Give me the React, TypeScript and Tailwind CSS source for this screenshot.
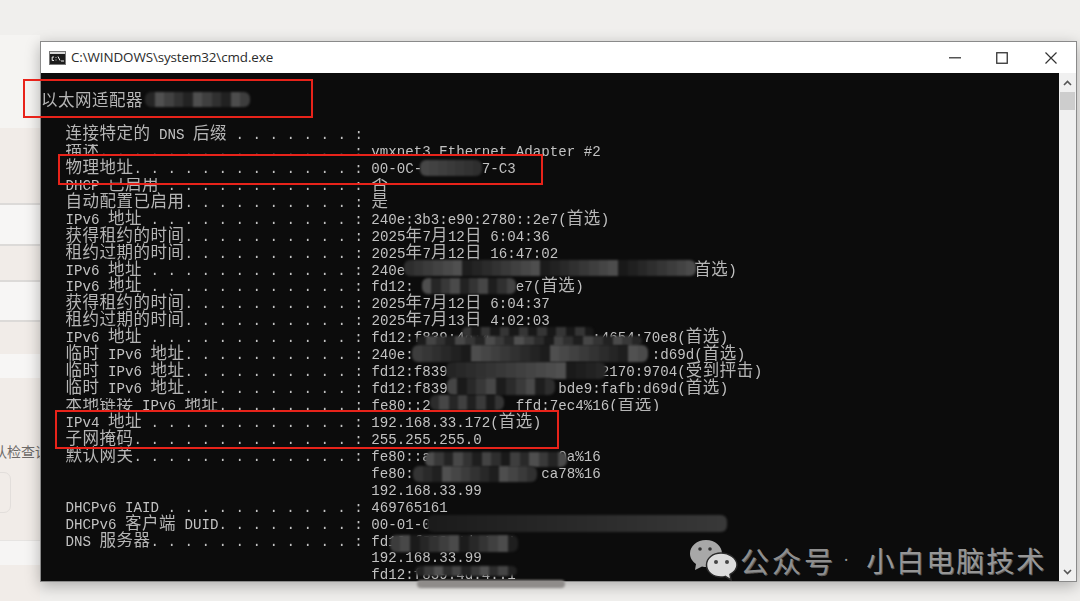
const cjkFont = `font-['Noto_Sans_CJK_SC','Noto_Sans_CJK_JP',sans-serif]`;

// console rows, label is padded with dots the way ipconfig does it
const rows: { label?: string; value?: string; cut?: string }[] = [
  { label: "连接特定的 DNS 后缀", value: "" },
  { label: "描述", value: "vmxnet3 Ethernet Adapter #2", cut: "h-[12px] overflow-hidden" },
  { label: "物理地址", value: "00-0C-       7-C3" },
  { label: "DHCP 已启用", value: "否", cut: "h-[14px] overflow-hidden" },
  { label: "自动配置已启用", value: "是" },
  { label: "IPv6 地址", value: "240e:3b3:e90:2780::2e7(首选)" },
  { label: "获得租约的时间", value: "2025年7月12日 6:04:36" },
  { label: "租约过期的时间", value: "2025年7月12日 16:47:02" },
  { label: "IPv6 地址", value: "240e                                  首选)" },
  { label: "IPv6 地址", value: "fd12:            e7(首选)" },
  { label: "获得租约的时间", value: "2025年7月12日 6:04:37" },
  { label: "租约过期的时间", value: "2025年7月13日 4:02:03" },
  { label: "IPv6 地址", value: "fd12:f839:4d:4            :4654:70e8(首选)" },
  { label: "临时 IPv6 地址", value: "240e:                            :d69d(首选)" },
  { label: "临时 IPv6 地址", value: "fd12:f839:1ll              2170:9704(受到抨击)" },
  { label: "临时 IPv6 地址", value: "fd12:f839             bde9:fafb:d69d(首选)" },
  { label: "本地链接 IPv6 地址", value: "fe80::2          ffd:7ec4%16(首选)", cut: "h-[13px] overflow-hidden" },
  { label: "IPv4 地址", value: "192.168.33.172(首选)" },
  { label: "子网掩码", value: "255.255.255.0" },
  { label: "默认网关", value: "fe80::a               0a%16" },
  { value: "fe80:               ca78%16" },
  { value: "192.168.33.99" },
  { label: "DHCPv6 IAID", value: "469765161" },
  { label: "DHCPv6 客户端 DUID", value: "00-01-0" },
  { label: "DNS 服务器", value: "fd12:f839:4d:4::1" },
  { value: "192.168.33.99" },
  { value: "fd12:f839:4d:4::1" },
];

// [left, top, width, height] of the blurred out parts
const mosaics: number[][] = [
  [145, 92, 105, 15],
  [420, 160, 62, 16],
  [404, 260, 292, 16],
  [422, 278, 94, 16],
  [462, 327, 132, 10],
  [416, 336, 226, 10],
  [412, 345, 236, 17],
  [446, 362, 160, 17],
  [447, 378, 108, 17],
  [430, 395, 74, 15],
  [425, 452, 142, 15],
  [413, 466, 124, 16],
  [427, 515, 300, 17],
  [390, 535, 128, 17],
  [415, 566, 102, 10],
];

const cells = (label: string) => {
  let n = 0;
  for (const ch of label) n += /[\u3000-\u9fff]/.test(ch) ? 2 : 1;
  return n;
};

const makeLine = (label?: string, value?: string) => {
  if (!label) return " ".repeat(36) + (value ?? "");
  let col = cells(label);
  let out = label;
  if (col % 2 === 1) {
    out += " ";
    col += 1;
  }
  while (col < 34) {
    out += ". ";
    col += 2;
  }
  return out + ": " + (value ?? "");
};

// CJK takes two cells of the console grid, so it gets its own span
function ConsoleText({ text }: { text: string }) {
  const parts = text.split(/([\u3000-\u9fff]+)/);
  return (
    <>
      {parts.map((part, i) =>
        i % 2 === 1 ? (
          <span key={i} className={`${cjkFont} text-[16.5px] leading-[0] tracking-[0.5px] text-[#b6b6b6]`}>
            {part}
          </span>
        ) : (
          <span key={i}>{part}</span>
        )
      )}
    </>
  );
}

function Mosaic({ box, seed }: { box: number[]; seed: number }) {
  const [left, top, width, height] = box;
  const cols = Math.ceil(width / 10);
  const shades: string[] = [];
  for (let i = 0; i < cols; i++) {
    const v = 24 + (((i + 3) * (seed + 7) * 37) % 58);
    shades.push(`rgb(${v},${v},${v})`);
  }
  return (
    <div
      className="absolute rounded-[6px] overflow-hidden blur-[1.2px] grid"
      style={{
        left,
        top,
        width,
        height,
        gridTemplateColumns: `repeat(${cols}, 1fr)`,
      }}
    >
      {shades.map((color, i) => (
        <div key={i} style={{ backgroundColor: color }} />
      ))}
    </div>
  );
}

function CmdIcon() {
  return (
    <svg width="17" height="14" viewBox="0 0 17 14">
      <rect x="0.5" y="0.5" width="16" height="13" fill="#1c1c1c" stroke="#777" />
      <rect x="1" y="1" width="15" height="2" fill="#d8d8d8" />
      <path d="M5 6H3.2V9.5H5" fill="none" stroke="#eee" strokeWidth="1" />
      <path d="M7 6.2V7M7 8.6V9.4" stroke="#eee" strokeWidth="1" />
      <path d="M9 5.5L11 9.5M12 10H15" fill="none" stroke="#eee" strokeWidth="1" />
    </svg>
  );
}

function WeChatMark() {
  return (
    <svg width="50" height="42" viewBox="0 0 50 42">
      <path d="M17 1C8 1 1 7 1 14.5c0 4.500 2.500 8 6 10.500L6 31l7-3.500c1.500.4 3 .5 4 .5 9 0 16-6 16-13.500S26 1 17 1Z" fill="#a8a8a8" />
      <path d="M32 14c-8.300 0-14.500 5.300-14.500 12S23.700 38 32 38c1.500 0 3-.2 4.300-.6L42 41l-1-5.500c4-2.300 7-5.500 7-9.500 0-6.700-7.700-12-16-12Z" fill="#dcdcdc" stroke="#2a2a2a" strokeWidth="1.500" />
      <circle cx="11" cy="10" r="1.800" fill="#333" />
      <circle cx="21" cy="10" r="1.800" fill="#333" />
      <circle cx="27" cy="23" r="2" fill="#444" />
      <circle cx="38" cy="23" r="2" fill="#444" />
    </svg>
  );
}

export default function App() {
  return (
    <div className="relative w-[1080px] h-[601px] overflow-hidden bg-[#f0efed]">
      {/* page behind the window, only the left edge shows */}
      <div className="w-[40px] h-full flex flex-col overflow-hidden">
        <div className="h-[35px] shrink-0" />
        <div className="h-[93px] shrink-0 bg-[#f5f4f2]" />
        <div className="h-[77px] shrink-0 bg-[#f1ece8] border-b-2 border-[#dcdad8]" />
        <div className="h-[41px] shrink-0 bg-[#f7f6f5] border-b-2 border-[#dcdad8]" />
        <div className="h-[36px] shrink-0 bg-[#f1ece8] border-b-2 border-[#dcdad8]" />
        <div className="h-[40px] shrink-0 bg-[#f7f6f5] border-b-2 border-[#dcdad8]" />
        <div className="h-[32px] shrink-0 bg-[#f1ece8]" />
        <div className="h-[24px] shrink-0 bg-[#f7f6f5]" />
        <div className="h-[162px] shrink-0 bg-[#f1ece8] relative overflow-hidden">
          <div className={`absolute top-[63px] left-[-7px] whitespace-nowrap text-[14px] leading-[20px] text-[#6e6b69] ${cjkFont}`}>
            队检查设
          </div>
          <div className="absolute top-[94px] left-[-24px] w-[35px] h-[41px] rounded-[7px] border border-[#e2dedb]" />
        </div>
        <div className="h-[25px] shrink-0 bg-[#f6f5f4] border-t border-[#e6e4e2]" />
        <div className="flex-1 bg-[#f1ece8]" />
      </div>

      {/* cmd window */}
      <div className="absolute left-[40px] top-[41px] w-[1037px] h-[541px] flex flex-col border border-[#8a8a8a] bg-white shadow-[0_4px_14px_rgba(0,0,0,0.28)]">
        <div className="h-[31px] shrink-0 flex items-center bg-white">
          <div className="ml-[8px]">
            <CmdIcon />
          </div>
          <span className="ml-[5px] text-[13.400px] text-[#2b2b2b] font-['Open_Sans',sans-serif] tracking-[-0.1px]">
            C:\WINDOWS\system32\cmd.exe
          </span>
          <div className="ml-auto flex items-center h-full">
            <svg width="12" height="2" viewBox="0 0 12 2" className="mr-[35px]">
              <rect width="12" height="1.500" fill="#555" />
            </svg>
            <svg width="12" height="12" viewBox="0 0 12 12" className="mr-[37px]">
              <rect x="0.750" y="0.750" width="10.500" height="10.500" fill="none" stroke="#333" strokeWidth="1.300" />
            </svg>
            <svg width="12" height="12" viewBox="0 0 12 12" className="mr-[19px]">
              <path d="M0.500 0.500L11.500 11.500M11.500 0.500L0.500 11.500" stroke="#333" strokeWidth="1.200" />
            </svg>
          </div>
        </div>
        <div className="flex-1 min-h-0 flex">
          <div className="flex-1 bg-[#0c0c0c] overflow-hidden text-[#c2c2c2] font-['Liberation_Mono',monospace] text-[14.17px] blur-[0.35px]">
            <div className={`mt-[16px] h-[20px] leading-[20px] text-[16.5px] tracking-[0.5px] text-[#b6b6b6] ${cjkFont}`}>
              以太网适配器
            </div>
            <div className="mt-[18px] ml-[24.500px] flex flex-col">
              {rows.map((row, i) => (
                <div key={i} className="h-[16.950px] shrink-0">
                  <div className={`leading-[17px] whitespace-pre ${row.cut ?? "h-[17px]"}`}>
                    <ConsoleText text={makeLine(row.label, row.value)} />
                  </div>
                </div>
              ))}
            </div>
          </div>
          {/* scrollbar */}
          <div className="w-[17px] shrink-0 bg-[#f0f0f0] flex flex-col items-center">
            <svg width="9" height="6" viewBox="0 0 9 6" className="mt-[7px]">
              <path d="M1 5L4.500 1.500L8 5" fill="none" stroke="#555" strokeWidth="1.600" />
            </svg>
            <div className="mt-[6px] w-[15px] h-[18px] bg-[#cdcdcd]" />
            <svg width="9" height="6" viewBox="0 0 9 6" className="mt-auto mb-[6px]">
              <path d="M1 1L4.500 4.500L8 1" fill="none" stroke="#555" strokeWidth="1.600" />
            </svg>
          </div>
        </div>
      </div>

      {mosaics.map((box, i) => (
        <Mosaic key={i} box={box} seed={i * 5 + 2} />
      ))}
      <div className="absolute left-[417px] top-[580px] w-[148px] h-[8px] rounded-[4px] bg-[#8f8c8a] blur-[1px]" />

      {/* red marks */}
      <div className="absolute left-[23px] top-[79px] w-[290px] h-[39px] border-2 border-[#e8231a]" />
      <div className="absolute left-[58px] top-[154px] w-[485px] h-[31px] border-2 border-[#e8231a]" />
      <div className="absolute left-[55px] top-[410px] w-[504px] h-[39px] border-2 border-[#e8231a]" />

      {/* watermark */}
      <div className="absolute left-[689px] top-[539px] flex items-center">
        <WeChatMark />
        <span className={`ml-[1px] text-[29px] leading-[40px] tracking-[3px] whitespace-nowrap text-[#8e8e8e] [text-shadow:1px_1px_0_#5c5c5c] ${cjkFont}`}>
          公众号
        </span>
        <span className="ml-[8px] mr-[18px] text-[16px] text-[#9a9a9a]">·</span>
        <span className={`text-[28px] leading-[40px] tracking-[2px] whitespace-nowrap text-[#969696] [text-shadow:1px_1px_0_#5c5c5c] ${cjkFont}`}>
          小白电脑技术
        </span>
      </div>
    </div>
  );
}
